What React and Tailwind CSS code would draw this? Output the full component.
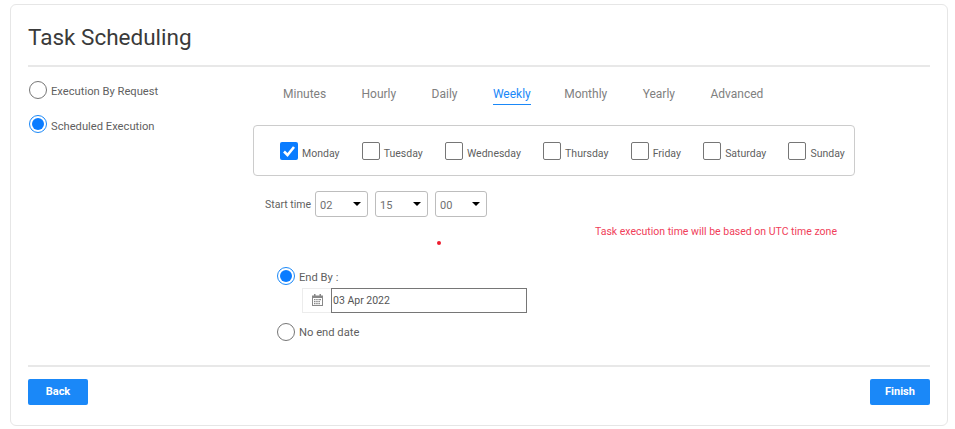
import React from "react";

function Radio({ checked }) {
  return checked ? (
    <span className="flex h-[18px] w-[18px] shrink-0 items-center justify-center rounded-full border border-[#1a88f8] bg-white">
      <span className="h-3 w-3 rounded-full bg-[#0a7cff]" />
    </span>
  ) : (
    <span className="h-[18px] w-[18px] shrink-0 rounded-full border border-[#767676] bg-white" />
  );
}

function Day({ label, checked }) {
  return (
    <div className="flex items-center gap-1">
      {checked ? (
        <span className="flex h-[18px] w-[18px] items-center justify-center rounded-[2px] bg-[#0a7cff]">
          <svg width="14" height="14" viewBox="0 0 14 14" fill="none">
            <path d="M2 7.5L5.5 11L12 3" stroke="white" strokeWidth="2.6" />
          </svg>
        </span>
      ) : (
        <span className="h-[18px] w-[18px] rounded-[2px] border border-[#767676] bg-white" />
      )}
      <span className="relative top-[3px] text-[10.5px] leading-[18px] text-[#5f5f5f]">{label}</span>
    </div>
  );
}

function TimeSelect({ value, w }) {
  return (
    <div className={`flex h-[26px] items-center justify-between rounded-[3px] border border-[#bdbdbd] bg-white pl-[4px] pr-[6px] text-[11px] text-[#707070] ${w}`}>
      <span className="relative top-[2px]">{value}</span>
      <span className="h-0 w-0 border-x-[4px] border-t-[4px] border-x-transparent border-t-black" />
    </div>
  );
}

const tabs = ["Minutes", "Hourly", "Daily", "Weekly", "Monthly", "Yearly", "Advanced"];
const days = ["Monday", "Tuesday", "Wednesday", "Thursday", "Friday", "Saturday", "Sunday"];

export default function App() {
  return (
    <div className="h-[429px] w-[955px] bg-white pb-[3px] pl-[10px] pr-[7px] pt-1 font-['Roboto',sans-serif]">
      <div className="flex h-full w-full flex-col rounded-[6px] border border-[#e6e6e6] bg-white px-[17px]">
        <h1 className="h-[60px] pt-[14px] text-[22.5px] font-normal leading-[36px] text-[#3a3a3a]">Task Scheduling</h1>
        <div className="h-[2px] bg-[#e8e8e8]" />
        <div className="flex h-[298px]">
          <div className="w-[225px] shrink-0 pl-[1px] pt-[14px]">
            <div className="flex h-[18px] items-center gap-[4px] text-[11.2px] text-[#5f5f5f]">
              <Radio />
              <span className="relative top-[2px]">Execution By Request</span>
            </div>
            <div className="mt-[16px] flex h-[18px] items-center gap-[4px] text-[11.2px] text-[#5f5f5f]">
              <Radio checked />
              <span className="relative top-[3px]">Scheduled Execution</span>
            </div>
          </div>
          <div className="flex-1">
            <div className="flex h-[58px] gap-[35.4px] pl-[30px] pt-[17px]">
              {tabs.map((t) => (
                <div key={t} className={t === "Weekly" ? "-mr-[2px] h-[21px] border-b border-[#1a88f8] text-[12px] leading-[20px] text-[#1a88f8]" : "h-[21px] text-[12px] leading-[20px] text-[#808080]"}>
                  {t}
                </div>
              ))}
            </div>
            <div className="flex h-[51px] w-[602px] items-center gap-[22.2px] rounded-[4px] border border-[#cccccc] pl-[26px]">
              {days.map((d) => (
                <Day key={d} label={d} checked={d === "Monday"} />
              ))}
            </div>
            <div className="mt-[15px] flex items-center pl-[12px]">
              <span className="relative top-[1px] mr-[4px] text-[10.5px] text-[#5f5f5f]">Start time</span>
              <TimeSelect value="02" w="w-[53px]" />
              <span className="w-[7px]" />
              <TimeSelect value="15" w="w-[53px]" />
              <span className="w-[7px]" />
              <TimeSelect value="00" w="w-[52px]" />
            </div>
            <div className="flex h-[33px] items-start">
              <span className="ml-[184px] mt-[24px] h-1 w-1 rounded-full bg-[#ee1c2e]" />
              <span className="ml-[154px] mt-[6px] text-[10.5px] leading-[17px] text-[#f0405a]">Task execution time will be based on UTC time zone</span>
            </div>
            <div className="mt-[17px] flex h-[18px] items-center gap-[4px] pl-[24px] text-[11.2px] text-[#5f5f5f]">
              <Radio checked />
              <span className="relative top-[2px]">End By :</span>
            </div>
            <div className="ml-[49px] mt-[3px] flex h-[25px]">
              <div className="flex w-[29px] items-center justify-center border border-r-0 border-[#ececec] pb-[2px]">
                <svg width="11" height="12" viewBox="0 0 11 12" fill="#888">
                  <path d="M2 0h1.5v1.5h4V0H9v1.5h2V12H0V1.5h2V0zM1 4v7h9V4H1z" />
                  <path d="M2 5h1.5v1.3H2zM4.2 5h1.5v1.3H4.2zM6.4 5h1.5v1.3H6.4zM8 5h1v1.3H8zM2 7h1.5v1.3H2zM4.2 7h1.5v1.3H4.2zM6.4 7h1.5v1.3H6.4zM2 9h1.5v1.3H2zM4.2 9h1.5v1.3H4.2zM6.4 9h1.5v1.3H6.4z" />
                </svg>
              </div>
              <div className="flex w-[196px] items-center border border-[#767676] pl-[1px] text-[10.5px] text-[#555]">03 Apr 2022</div>
            </div>
            <div className="mt-[10px] flex h-[18px] items-center gap-[4px] pl-[24px] text-[11.2px] text-[#5f5f5f]">
              <Radio />
              <span className="relative top-[1px]">No end date</span>
            </div>
          </div>
        </div>
        <div className="h-[2px] bg-[#e8e8e8]" />
        <div className="flex justify-between pt-[12px]">
          <button className="h-[26px] w-[60px] rounded-[2px] bg-[#1a88f8] text-[11px] font-bold text-white">Back</button>
          <button className="h-[26px] w-[60px] rounded-[2px] bg-[#1a88f8] text-[11px] font-bold text-white">Finish</button>
        </div>
      </div>
    </div>
  );
}
